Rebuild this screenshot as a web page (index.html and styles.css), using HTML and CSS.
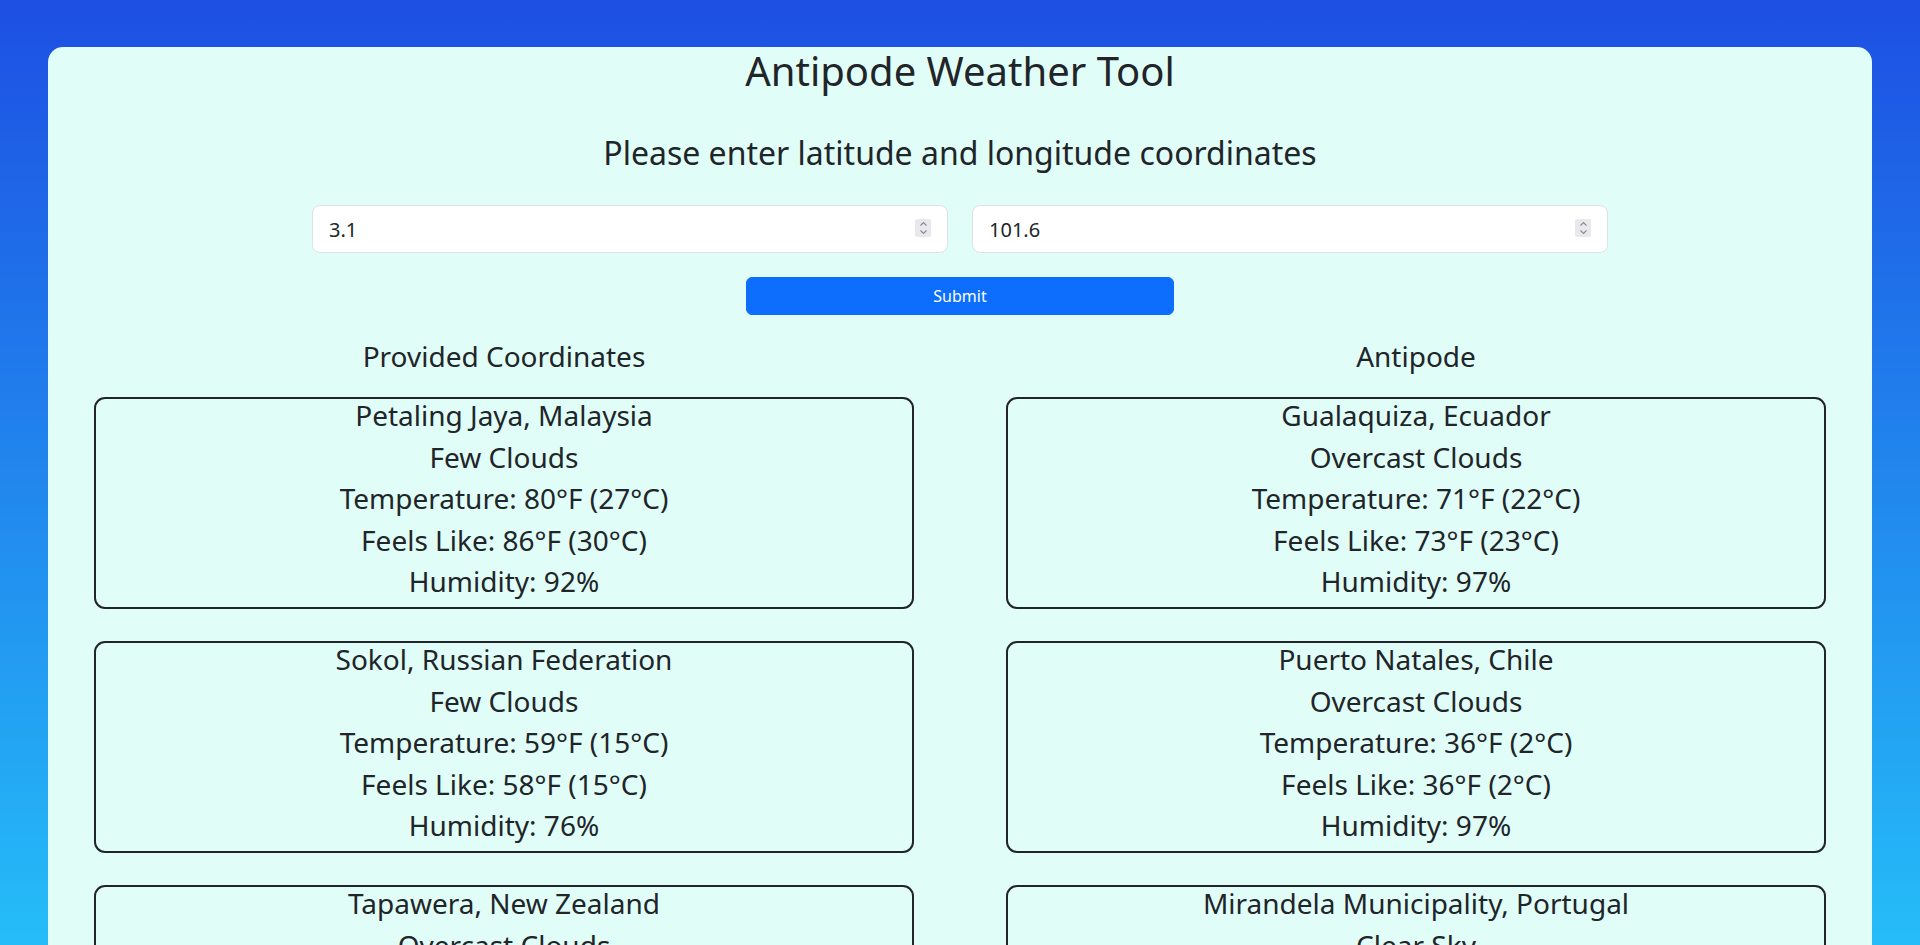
FILE: index.html
```html
<!DOCTYPE html>
<html lang="en">
<head>
<meta charset="utf-8">
<title>Antipode Weather Tool</title>
<link rel="stylesheet" href="styles.css">
</head>
<body>
<main class="panel">
  <h1 class="title">Antipode Weather Tool</h1>
  <h2 class="subtitle">Please enter latitude and longitude coordinates</h2>
  <form class="coords">
    <div class="fields">
      <div class="field-wrap">
        <input class="field" type="number" step="any" value="3.1" aria-label="Latitude">
        <span class="spin" aria-hidden="true">
          <svg width="9" height="14" viewBox="0 0 9 14"><path d="M1.5 4.5 L4.5 1.5 L7.5 4.5 M1.5 9.5 L4.5 12.5 L7.5 9.5" fill="none" stroke="#8a8a8e" stroke-width="1.1"/></svg>
        </span>
      </div>
      <div class="field-wrap">
        <input class="field" type="number" step="any" value="101.6" aria-label="Longitude">
        <span class="spin" aria-hidden="true">
          <svg width="9" height="14" viewBox="0 0 9 14"><path d="M1.5 4.5 L4.5 1.5 L7.5 4.5 M1.5 9.5 L4.5 12.5 L7.5 9.5" fill="none" stroke="#8a8a8e" stroke-width="1.1"/></svg>
        </span>
      </div>
    </div>
    <button class="submit" type="button">Submit</button>
  </form>
  <section class="results">
    <div class="column">
      <h3 class="col-heading">Provided Coordinates</h3>
      <div class="cards">
        <div class="card">
          <h3 class="line">Petaling Jaya, Malaysia</h3>
          <h3 class="line">Few Clouds</h3>
          <h3 class="line">Temperature: 80°F (27°C)</h3>
          <h3 class="line">Feels Like: 86°F (30°C)</h3>
          <h3 class="line">Humidity: 92%</h3>
        </div>
        <div class="card">
          <h3 class="line">Sokol, Russian Federation</h3>
          <h3 class="line">Few Clouds</h3>
          <h3 class="line">Temperature: 59°F (15°C)</h3>
          <h3 class="line">Feels Like: 58°F (15°C)</h3>
          <h3 class="line">Humidity: 76%</h3>
        </div>
        <div class="card">
          <h3 class="line">Tapawera, New Zealand</h3>
          <h3 class="line">Overcast Clouds</h3>
          <h3 class="line">Temperature: 52°F (11°C)</h3>
          <h3 class="line">Feels Like: 51°F (11°C)</h3>
          <h3 class="line">Humidity: 85%</h3>
        </div>
      </div>
    </div>
    <div class="column">
      <h3 class="col-heading">Antipode</h3>
      <div class="cards">
        <div class="card">
          <h3 class="line">Gualaquiza, Ecuador</h3>
          <h3 class="line">Overcast Clouds</h3>
          <h3 class="line">Temperature: 71°F (22°C)</h3>
          <h3 class="line">Feels Like: 73°F (23°C)</h3>
          <h3 class="line">Humidity: 97%</h3>
        </div>
        <div class="card">
          <h3 class="line">Puerto Natales, Chile</h3>
          <h3 class="line">Overcast Clouds</h3>
          <h3 class="line">Temperature: 36°F (2°C)</h3>
          <h3 class="line">Feels Like: 36°F (2°C)</h3>
          <h3 class="line">Humidity: 97%</h3>
        </div>
        <div class="card">
          <h3 class="line">Mirandela Municipality, Portugal</h3>
          <h3 class="line">Clear Sky</h3>
          <h3 class="line">Temperature: 64°F (18°C)</h3>
          <h3 class="line">Feels Like: 63°F (17°C)</h3>
          <h3 class="line">Humidity: 60%</h3>
        </div>
      </div>
    </div>
  </section>
</main>
</body>
</html>
```

FILE: styles.css
```css
html {
  background: linear-gradient(180deg, #1d4fe3 0%, #25bdf8 100%) fixed;
  min-height: 100%;
}

body {
  margin: 0;
  padding: 47px 48px 40px;
  font-family: "Noto Sans", "Open Sans", sans-serif;
  color: #212529;
}

.panel {
  background: #e0fdf8;
  border-radius: 15px;
  padding: 0 0 40px;
  text-align: center;
}

.title {
  margin: 0;
  font-size: 40px;
  line-height: 1.2;
  font-weight: 400;
}

.subtitle {
  margin: 39px 0 0;
  font-size: 32px;
  line-height: 1.2;
  font-weight: 400;
}

.coords {
  margin-top: 33px;
  display: flex;
  flex-direction: column;
  align-items: center;
  gap: 24px;
}

.fields {
  width: 1296px;
  display: grid;
  grid-template-columns: 1fr 1fr;
  gap: 24px;
}

.field-wrap {
  position: relative;
  display: flex;
}

.field {
  box-sizing: border-box;
  width: 100%;
  height: 48px;
  padding: 8px 16px;
  font-family: inherit;
  font-size: 20px;
  line-height: 1.5;
  color: #212529;
  background: #fff;
  border: 1px solid #dee2e6;
  border-radius: 8px;
  outline: none;
  -moz-appearance: textfield;
}

.field::-webkit-inner-spin-button,
.field::-webkit-outer-spin-button {
  -webkit-appearance: none;
  margin: 0;
}

.spin {
  position: absolute;
  right: 17px;
  top: 14px;
  width: 16px;
  height: 18px;
  background: #e9e9ed;
  border-radius: 2px;
  display: flex;
  align-items: center;
  justify-content: center;
}

.submit {
  width: 428px;
  height: 38px;
  box-sizing: border-box;
  padding: 6px 12px;
  font-family: inherit;
  font-size: 16px;
  line-height: 1.5;
  color: #fff;
  background: #0d6efd;
  border: 1px solid #0d6efd;
  border-radius: 6px;
}

.results {
  margin-top: 25px;
  display: grid;
  grid-template-columns: 1fr 1fr;
}

.column {
  display: flex;
  flex-direction: column;
  align-items: center;
}

.col-heading {
  margin: 0;
  font-size: 28px;
  line-height: 1.2;
  font-weight: 400;
}

.cards {
  margin-top: 23px;
  width: 90%;
  display: flex;
  flex-direction: column;
  gap: 32px;
}

.card {
  border: 2px solid #212529;
  border-radius: 11px;
}

.line {
  margin: 0 0 8px;
  font-size: 28px;
  line-height: 1.2;
  font-weight: 400;
}
```
